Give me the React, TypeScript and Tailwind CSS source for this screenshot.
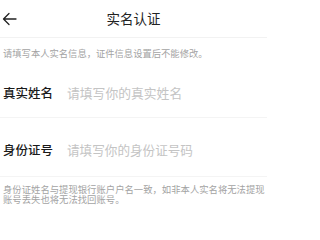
export default function App() {
  return (
    <div
      className="w-[267px] h-[217px] bg-white overflow-hidden"
      style={{ fontFamily: '"Noto Sans CJK SC", "Noto Sans", sans-serif' }}
    >
      {/* Header */}
      <div className="relative flex h-[38px] items-center justify-center border-b border-[#f2f2f2]">
        <svg
          className="absolute left-[2px] top-[12px]"
          width="15"
          height="14"
          viewBox="0 0 15 14"
          fill="none"
          stroke="#222"
          strokeWidth="1.3"
          strokeLinecap="round"
          strokeLinejoin="round"
        >
          <path d="M14 7H1.5M7 1.5L1.5 7L7 12.5" />
        </svg>
        <span className="text-[13.5px] leading-none text-[#222]">实名认证</span>
      </div>

      {/* Hint */}
      <div className="flex h-[32px] items-center pl-[3px] text-[9.3px] leading-none text-[#a3a3a3]">
        请填写本人实名信息，证件信息设置后不能修改。
      </div>

      {/* Name */}
      <div className="flex h-[48px] items-center border-b border-[#f4f4f4] pl-[3px]">
        <span className="w-[64px] text-[12.5px] font-medium leading-none text-[#1a1a1a]">
          真实姓名
        </span>
        <span className="text-[12.8px] leading-none text-[#c4c4c4]">请填写你的真实姓名</span>
      </div>

      {/* ID */}
      <div className="flex h-[59px] items-center border-b border-[#f4f4f4] pl-[3px] pt-[7px]">
        <span className="w-[64px] text-[12.5px] font-medium leading-none text-[#1a1a1a]">
          身份证号
        </span>
        <span className="text-[12.6px] leading-none text-[#c4c4c4]">请填写你的身份证号码</span>
      </div>

      {/* Footer note */}
      <p className="pl-[3px] pt-[7px] text-[9.35px] leading-[10px] text-[#a3a3a3]">
        身份证姓名与提现银行账户户名一致，如非本人实名将无法提现账号丢失也将无法找回账号。
      </p>
    </div>
  );
}
